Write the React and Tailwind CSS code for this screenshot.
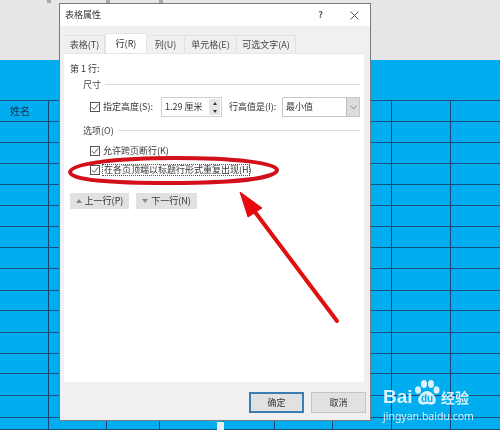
const font = { fontFamily: '"Noto Sans CJK SC", "Noto Sans", sans-serif' };
const colW = [49, 58, 53, 64, 51, 58, 59, 59, 49];
const rowH = [21, 21, 21, 21, 21, 21, 21, 21, 22, 20, 22, 21, 20, 22, 22, 12];

function TableBg() {
  return (
    <div className="h-[430px] w-[500px] flex flex-col bg-[#e6e6e6]">
      <div className="h-[60px] flex items-start relative">
        {[47, 106, 159].map((x) => (
          <div key={x} className="absolute top-0 h-[3px] w-[4px] bg-[#a9a9a9]" style={{ left: x }} />
        ))}
      </div>
      <div className="h-[41px] bg-[#00adef] border-b border-[#17507f]" />
      {rowH.map((h, r) => (
        <div key={r} className="flex bg-[#00adef] border-b border-[#17507f]" style={{ height: h }}>
          {colW.map((w, c) => (
            <div
              key={c}
              className={c < 8 ? "h-full border-r border-[#1a4777] flex items-center" : "h-full"}
              style={{ width: w }}
            >
              {r === 0 && c === 0 ? (
                <span className="pl-[10px] text-[10px] leading-none text-[#16324f]">姓名</span>
              ) : null}
            </div>
          ))}
        </div>
      ))}
    </div>
  );
}

function Check({ checked = true }) {
  return (
    <span className="w-[10px] h-[10px] border border-[#555] bg-white flex items-center justify-center shrink-0">
      {checked && (
        <svg viewBox="0 0 10 10" className="w-[8px] h-[8px]">
          <path d="M1 5 L4 8 L9 1.5" fill="none" stroke="#333" strokeWidth="1" />
        </svg>
      )}
    </span>
  );
}

function Tab({ label, w, active }) {
  return (
    <div
      className={
        active
          ? "h-[20px] bg-white flex items-center justify-center text-[9px] text-[#333] border-x border-t border-[#e3e3e3]"
          : "h-[18px] mt-[2px] bg-[#f0f0f0] flex items-center justify-center text-[9px] text-[#444] border-r border-t border-[#e2e2e2]"
      }
      style={{ width: w }}
    >
      {label}
    </div>
  );
}

function Legend({ label, lineW }) {
  return (
    <div className="flex items-center gap-[4px] pl-[19px] text-[9px] text-[#444] leading-none h-[12px]">
      <span>{label}</span>
      <span className="h-px bg-[#dcdcdc]" style={{ width: lineW }} />
    </div>
  );
}

function Btn({ children, w, primary }) {
  return (
    <div
      className={
        primary
          ? "h-[21px] border-2 border-[#3a7fb0] bg-[#e1e1e1] flex items-center justify-center text-[9px] text-[#333]"
          : "h-[21px] border border-[#c4c4c4] bg-[#e1e1e1] flex items-center justify-center text-[9px] text-[#333]"
      }
      style={{ width: w }}
    >
      {children}
    </div>
  );
}

function Dialog() {
  return (
    <div className="absolute left-[59px] top-[3px] w-[312px] h-[418px] bg-[#f0f0f0] border border-[#727c84] flex flex-col text-[#333]">
      <div className="h-[22px] bg-white flex items-center pl-[5px] pr-[11px] text-[9px] shrink-0">
        <span className="text-[#333]">表格属性</span>
        <span className="ml-auto mr-[27px] text-[9px] font-bold text-[#555]">?</span>
        <svg viewBox="0 0 9 9" className="w-[9px] h-[9px]">
          <path d="M0.5 0.5 L8.5 8.5 M8.5 0.5 L0.5 8.5" stroke="#444" strokeWidth="0.9" />
        </svg>
      </div>
      <div className="flex pl-[5px] pt-[7px] shrink-0">
        <Tab label="表格(T)" w={40} />
        <Tab label="行(R)" w={42} active />
        <Tab label="列(U)" w={38} />
        <Tab label="单元格(E)" w={52} />
        <Tab label="可选文字(A)" w={59} />
      </div>
      <div className="ml-[4px] w-[300px] h-[329px] bg-white border-t border-[#e6e6e6] flex flex-col shrink-0">
        <div className="pl-[6px] pt-[10px] text-[9px] leading-none text-[#333]">第 1 行:</div>
        <div className="mt-[5px]">
          <Legend label="尺寸" lineW={255} />
        </div>
        <div className="flex items-center h-[20px] mt-[7px] pl-[26px] text-[9px]">
          <Check />
          <span className="ml-[3px] w-[58px]">指定高度(S):</span>
          <div className="w-[61px] h-[20px] border border-[#d0d0d0] flex items-center justify-between pl-[3px] pr-px">
            <span className="text-[9px] text-[#333]">1.29 厘米</span>
            <div className="w-[11px] h-[16px] bg-[#e6e6e6] flex flex-col items-center justify-around">
              <span className="w-0 h-0 border-x-[2.5px] border-x-transparent border-b-[3px] border-b-[#333]" />
              <span className="w-0 h-0 border-x-[2.5px] border-x-transparent border-t-[3px] border-t-[#333]" />
            </div>
          </div>
          <span className="ml-[7px] w-[53px]">行高值是(I):</span>
          <div className="w-[78px] h-[20px] border border-[#c8c8c8] flex items-center justify-between pl-[3px]">
            <span>最小值</span>
            <div className="w-[13px] h-full bg-[#dcdcdc] border-l border-[#bdbdbd] flex items-center justify-center">
              <svg viewBox="0 0 8 5" className="w-[7px] h-[5px]">
                <path d="M0.5 0.5 L4 4 L7.5 0.5" fill="none" stroke="#666" strokeWidth="0.9" />
              </svg>
            </div>
          </div>
        </div>
        <div className="mt-[7px]">
          <Legend label="选项(O)" lineW={242} />
        </div>
        <div className="flex items-center h-[12px] mt-[9px] pl-[26px] text-[9px]">
          <Check />
          <span className="ml-[3px]">允许跨页断行(K)</span>
        </div>
        <div className="flex items-center h-[12px] mt-[7px] pl-[26px] text-[9px]">
          <Check />
          <span className="ml-[2px] border border-dotted border-[#555] leading-[10px] px-px w-[148px] whitespace-nowrap">
            在各页顶端以标题行形式重复出现(H)
          </span>
        </div>
        <div className="flex gap-[7px] mt-[17px] pl-[6px]">
          <div className="w-[59px] h-[16px] bg-[#e1e1e1] flex items-center justify-center gap-[3px] text-[9px]">
            <span className="w-0 h-0 border-x-[3px] border-x-transparent border-b-[4px] border-b-[#888]" />
            上一行(P)
          </div>
          <div className="w-[61px] h-[16px] bg-[#e1e1e1] flex items-center justify-center gap-[3px] text-[9px]">
            <span className="w-0 h-0 border-x-[3px] border-x-transparent border-t-[4px] border-t-[#888]" />
            下一行(N)
          </div>
        </div>
      </div>
      <div className="flex gap-[7px] pl-[189px] mt-[10px]">
        <Btn w={55} primary>确定</Btn>
        <Btn w={55}>取消</Btn>
      </div>
    </div>
  );
}

function Annotations() {
  return (
    <svg className="absolute left-0 top-0 w-[500px] h-[430px] pointer-events-none" viewBox="0 0 500 430">
      <path
        d="M70 172 C72 163 120 158 175 158 C235 158 277 163 277 170 C277 178 235 183 170 183 C110 183 70 180 70 172 Z"
        fill="none"
        stroke="#d40f1c"
        strokeWidth="4"
      />
      <path d="M255 212 L337 321" stroke="#e0100f" strokeWidth="4" strokeLinecap="round" fill="none" />
      <path d="M240 192 L262 208 L248 217 Z" fill="#e8090f" stroke="#e8090f" strokeWidth="1" strokeLinejoin="round" />
    </svg>
  );
}

function Watermark() {
  return (
    <div className="absolute left-[383px] top-[379px] w-[92px] text-white/85">
      <div className="flex items-end h-[28px]">
        <span className="text-[19px] leading-[20px] font-bold w-[31px]" style={{ fontFamily: '"Liberation Sans", sans-serif' }}>Bai</span>
        <svg viewBox="0 0 26 28" className="w-[26px] h-[28px] shrink-0">
          <g fill="#ffffff" fillOpacity="0.85">
            <ellipse cx="4" cy="11" rx="3" ry="3.8" />
            <ellipse cx="10" cy="5" rx="3" ry="4" />
            <ellipse cx="17" cy="5" rx="3" ry="4" />
            <ellipse cx="22.5" cy="11" rx="3" ry="3.8" />
            <path d="M13 12 C18 12 24 19 21 24 C18 27 15 25 13 25 C11 25 8 27 5 24 C2 19 8 12 13 12 Z" />
          </g>
          <text x="13" y="23" textAnchor="middle" fontSize="10" fontWeight="700" fill="#00adef" fontFamily="Liberation Sans">du</text>
        </svg>
        <span className="ml-px text-[14px] leading-[20px] font-bold whitespace-nowrap">经验</span>
      </div>
      <div className="mt-[2px] text-[10.5px] leading-[14px] whitespace-nowrap" style={{ fontFamily: '"Noto Sans", sans-serif' }}>jingyan.baidu.com</div>
    </div>
  );
}

export default function App() {
  return (
    <div className="relative w-[500px] h-[430px] overflow-hidden blur-[0.4px]" style={font}>
      <TableBg />
      <div className="absolute left-[217px] top-[422px] w-[7px] h-[8px] bg-[#e8eef2]" />
      <Dialog />
      <Annotations />
      <Watermark />
    </div>
  );
}
